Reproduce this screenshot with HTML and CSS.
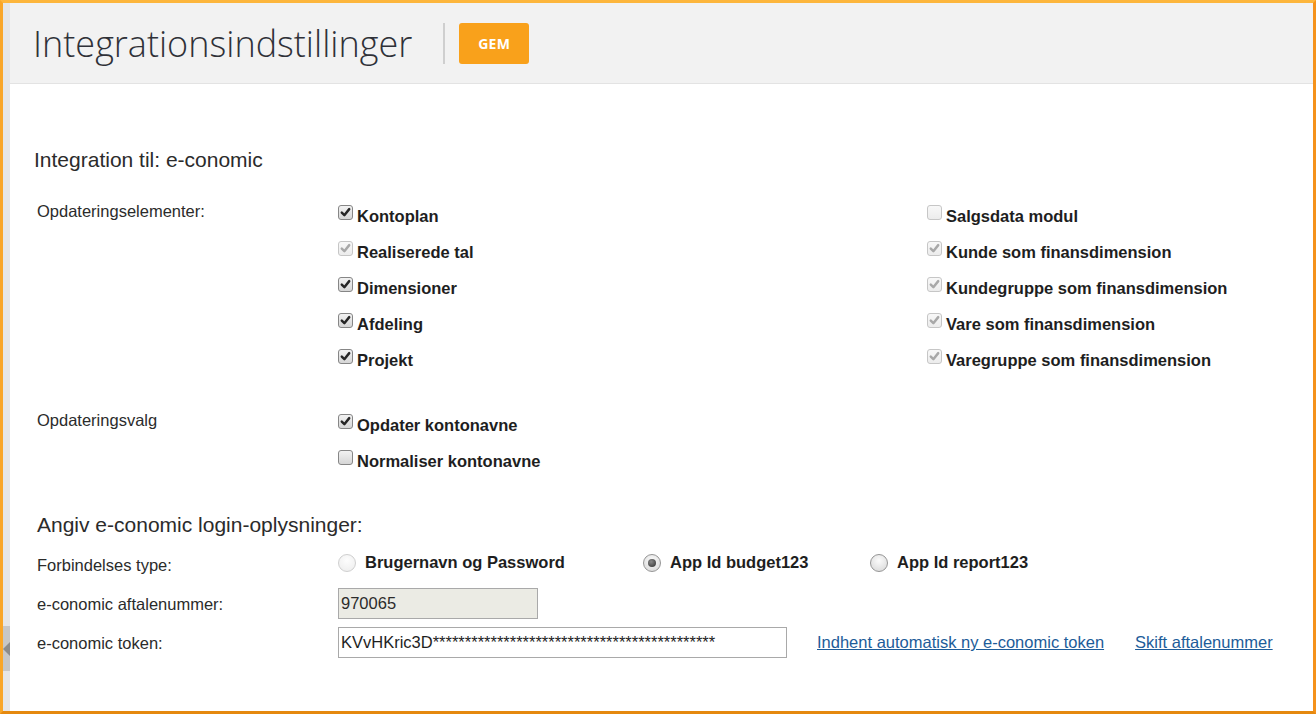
FILE: index.html
```html
<!DOCTYPE html>
<html lang="da">
<head>
<meta charset="utf-8">
<title>Integrationsindstillinger</title>
<link rel="stylesheet" href="styles.css">
</head>
<body>
<div class="frame">
  <div class="rail">
    <div class="rail-tab">
      <svg class="rail-arrow" width="7" height="14" viewBox="0 0 7 14"><polygon points="0,7 7,0 7,14" fill="#8c8c8c"/></svg>
    </div>
  </div>
  <div class="main">
    <header class="topbar">
      <h1 class="title">Integrationsindstillinger</h1>
      <span class="divider"></span>
      <button class="btn-save" type="button">GEM</button>
    </header>

    <section class="content">
      <h2 class="section-title">Integration til: e-conomic</h2>

      <div class="field-group group-elements">
        <div class="field-label">Opdateringselementer:</div>
        <div class="check-grid">
          <div class="check-col">
            <label class="check"><span class="box on"><svg viewBox="0 0 15 15"><path d="M3.2 7.6 L6.2 10.6 L11.8 3.6"/></svg></span>Kontoplan</label>
            <label class="check"><span class="box on disabled"><svg viewBox="0 0 15 15"><path d="M3.2 7.6 L6.2 10.6 L11.8 3.6"/></svg></span>Realiserede tal</label>
            <label class="check"><span class="box on"><svg viewBox="0 0 15 15"><path d="M3.2 7.6 L6.2 10.6 L11.8 3.6"/></svg></span>Dimensioner</label>
            <label class="check"><span class="box on"><svg viewBox="0 0 15 15"><path d="M3.2 7.6 L6.2 10.6 L11.8 3.6"/></svg></span>Afdeling</label>
            <label class="check"><span class="box on"><svg viewBox="0 0 15 15"><path d="M3.2 7.6 L6.2 10.6 L11.8 3.6"/></svg></span>Projekt</label>
          </div>
          <div class="check-col">
            <label class="check"><span class="box disabled"></span>Salgsdata modul</label>
            <label class="check"><span class="box on disabled"><svg viewBox="0 0 15 15"><path d="M3.2 7.6 L6.2 10.6 L11.8 3.6"/></svg></span>Kunde som finansdimension</label>
            <label class="check"><span class="box on disabled"><svg viewBox="0 0 15 15"><path d="M3.2 7.6 L6.2 10.6 L11.8 3.6"/></svg></span>Kundegruppe som finansdimension</label>
            <label class="check"><span class="box on disabled"><svg viewBox="0 0 15 15"><path d="M3.2 7.6 L6.2 10.6 L11.8 3.6"/></svg></span>Vare som finansdimension</label>
            <label class="check"><span class="box on disabled"><svg viewBox="0 0 15 15"><path d="M3.2 7.6 L6.2 10.6 L11.8 3.6"/></svg></span>Varegruppe som finansdimension</label>
          </div>
        </div>
      </div>

      <div class="field-group group-options">
        <div class="field-label">Opdateringsvalg</div>
        <div class="check-col">
          <label class="check"><span class="box on"><svg viewBox="0 0 15 15"><path d="M3.2 7.6 L6.2 10.6 L11.8 3.6"/></svg></span>Opdater kontonavne</label>
          <label class="check"><span class="box"></span>Normaliser kontonavne</label>
        </div>
      </div>

      <h2 class="section-title login-title">Angiv e-conomic login-oplysninger:</h2>

      <div class="form-row first-row">
        <div class="form-label">Forbindelses type:</div>
        <label class="radio-opt opt-user"><span class="radio disabled"></span>Brugernavn og Password</label>
        <label class="radio-opt opt-budget"><span class="radio checked"></span>App Id budget123</label>
        <label class="radio-opt"><span class="radio"></span>App Id report123</label>
      </div>
      <div class="form-row">
        <div class="form-label">e-conomic aftalenummer:</div>
        <input class="text-input agreement" type="text" value="970065" disabled>
      </div>
      <div class="form-row">
        <div class="form-label">e-conomic token:</div>
        <input class="text-input token" type="text" value="KVvHKric3D********************************************">
        <a class="link link-token" href="#">Indhent automatisk ny e-conomic token</a>
        <a class="link" href="#">Skift aftalenummer</a>
      </div>
    </section>
  </div>
</div>
</body>
</html>
```

FILE: styles.css
```css
html, body {
  margin: 0;
  padding: 0;
  background: #fff;
}

.frame {
  box-sizing: border-box;
  width: 1316px;
  height: 714px;
  border-style: solid;
  border-width: 3px;
  border-color: #fdb63c #f5921b #e5890f #f9a628;
  display: flex;
  overflow: hidden;
  background: #fff;
  font-family: "Liberation Sans", Arial, sans-serif;
}

.rail {
  flex: none;
  width: 7px;
  background: #e6e6e6;
  display: flex;
  flex-direction: column;
}

.rail-tab {
  margin-top: 623px;
  height: 45px;
  background: #c7c7c7;
  display: flex;
  align-items: center;
}

.rail-arrow {
  display: block;
}

.main {
  flex: 1;
  min-width: 0;
  display: flex;
  flex-direction: column;
}

.topbar {
  flex: none;
  height: 80px;
  background: #f2f2f2;
  border-bottom: 1px solid #e3e3e3;
  display: flex;
  align-items: center;
  padding-left: 23px;
}

.title {
  margin: 0;
  font-family: "Open Sans", sans-serif;
  font-weight: 300;
  font-size: 36px;
  line-height: 44px;
  color: #2f3138;
  position: relative;
  top: 1px;
}

.divider {
  width: 2px;
  height: 41px;
  background: #cfcfcf;
  margin-left: 31px;
}

.btn-save {
  margin-left: 14px;
  width: 70px;
  height: 41px;
  padding: 0;
  background: #f9a11b;
  border: none;
  border-radius: 3px;
  color: #fff;
  font-family: "Open Sans", sans-serif;
  font-weight: 700;
  font-size: 14px;
  letter-spacing: 0.3px;
}

.content {
  padding-left: 24px;
}

.section-title {
  margin: 64px 0 0;
  font-weight: normal;
  font-size: 21px;
  line-height: 24px;
  color: #2b2b2b;
}

.field-group {
  display: flex;
  margin-left: 3px;
}

.group-elements {
  margin-top: 26px;
}

.group-options {
  margin-top: 29px;
}

.field-label {
  flex: none;
  width: 301px;
  font-size: 16.5px;
  line-height: 26px;
  color: #2b2b2b;
}

.check-grid {
  display: grid;
  grid-template-columns: 589px auto;
}

.check-col {
  display: flex;
  flex-direction: column;
}

.check {
  display: flex;
  align-items: flex-start;
  gap: 4px;
  height: 36px;
  font-weight: bold;
  font-size: 16.5px;
  line-height: 36px;
  color: #1e1e1e;
  white-space: nowrap;
}

.box {
  flex: none;
  box-sizing: border-box;
  width: 15px;
  height: 15px;
  margin-top: 7px;
  border: 1px solid #868686;
  border-radius: 3px;
  background: linear-gradient(#f2f2f2, #d6d6d6);
  display: flex;
}

.box svg {
  width: 13px;
  height: 13px;
  margin: 0;
}

.box svg path {
  fill: none;
  stroke: #262626;
  stroke-width: 2.8;
  stroke-linecap: round;
  stroke-linejoin: round;
}

.box.disabled {
  border-color: #c6c6c6;
  background: linear-gradient(#f8f8f8, #ececec);
}

.box.disabled svg path {
  stroke: #a8a8a8;
}

.login-title {
  margin-top: 34px;
  margin-left: 3px;
}

.form-row {
  display: flex;
  align-items: center;
  height: 39px;
  margin-left: 3px;
  font-size: 16.5px;
}

.first-row {
  margin-top: 8px;
}

.form-label {
  flex: none;
  width: 301px;
  color: #2b2b2b;
  position: relative;
  top: 1px;
}

.radio-opt {
  display: flex;
  align-items: center;
  gap: 9px;
  font-weight: bold;
  color: #1e1e1e;
  white-space: nowrap;
  position: relative;
  top: -2px;
}

.opt-user {
  width: 305px;
}

.opt-budget {
  width: 227px;
}

.radio {
  flex: none;
  box-sizing: border-box;
  width: 18px;
  height: 18px;
  border-radius: 50%;
  border: 1px solid #959595;
  background: radial-gradient(circle at 50% 35%, #fbfbfb, #d6d6d6);
  display: flex;
  align-items: center;
  justify-content: center;
}

.radio.disabled {
  border-color: #cfcfcf;
  background: radial-gradient(circle at 50% 35%, #fdfdfd, #ececec);
}

.radio.checked::after {
  content: "";
  width: 8px;
  height: 8px;
  border-radius: 50%;
  background: radial-gradient(circle at 40% 35%, #8a8a8a, #2e2e2e);
}

.text-input {
  box-sizing: border-box;
  height: 31px;
  margin: 0;
  padding: 0 2px;
  border: 1px solid #a9a9a9;
  font-family: "Liberation Sans", Arial, sans-serif;
  font-size: 16.5px;
  color: #1e1e1e;
  background: #fff;
}

.text-input.agreement {
  width: 200px;
  background: #ebebe4;
  color: #2b2b2b;
  -webkit-text-fill-color: #2b2b2b;
  opacity: 1;
}

.text-input.token {
  width: 449px;
}

.link {
  color: #1d5c99;
  text-decoration: underline;
  white-space: nowrap;
}

.link-token {
  margin-left: 30px;
  margin-right: 31px;
}
```
